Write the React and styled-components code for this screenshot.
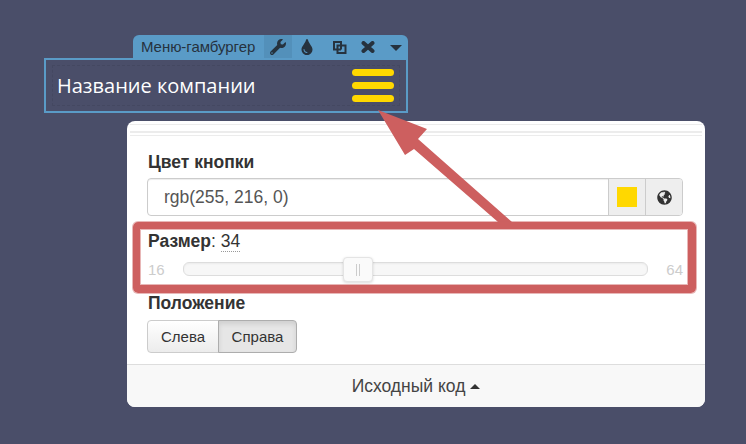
import React from "react";
import styled, { createGlobalStyle } from "styled-components";
import { FaWrench, FaTint, FaGlobeAmericas } from "react-icons/fa";

const GlobalStyle = createGlobalStyle`
  html, body {
    margin: 0;
    padding: 0;
    background: #4a4e69;
    font-family: "Liberation Sans", Arial, sans-serif;
  }
`;

const Stage = styled.div`
  position: relative;
  width: 746px;
  height: 444px;
  padding: 35px 0 0 44px;
  box-sizing: border-box;
  overflow: hidden;
`;

const Widget = styled.div`
  width: 364px;
  display: flex;
  flex-direction: column;
  align-items: flex-end;
`;

const Toolbar = styled.div`
  width: 275px;
  height: 23px;
  box-sizing: border-box;
  padding-left: 8px;
  display: flex;
  align-items: center;
  background: #5a9bc7;
  border-radius: 6px 6px 0 0;
  color: #26323e;
`;

const ToolbarTitle = styled.span`
  width: 123px;
  flex: none;
  font-size: 15px;
  letter-spacing: -0.05px;
`;

const ToolButton = styled.span`
  width: ${(p) => p.$w}px;
  flex: none;
  height: 23px;
  display: flex;
  align-items: center;
  justify-content: center;
  font-size: 16px;
  background: ${(p) => (p.$active ? "#5390ba" : "transparent")};
`;

const DownCaret = styled.span`
  width: 0;
  height: 0;
  margin: 3px 0 0 3px;
  border-left: 6.5px solid transparent;
  border-right: 6.5px solid transparent;
  border-top: 6px solid #26323e;
`;

const Block = styled.div`
  position: relative;
  width: 100%;
  height: 55px;
  box-sizing: border-box;
  border: 2px solid #5a9bc7;
  padding: 0 12px 0 11px;
  display: flex;
  align-items: center;
  justify-content: space-between;
  &::before {
    content: "";
    position: absolute;
    inset: 5px 6px;
    border: 1px dashed rgba(0, 0, 0, 0.07);
  }
`;

const CompanyName = styled.span`
  color: #fff;
  font-family: "Open Sans", "Noto Sans", sans-serif;
  font-size: 20px;
`;

const Burger = styled.div`
  width: 42px;
  display: flex;
  flex-direction: column;
  gap: 6px;
`;

const BurgerBar = styled.span`
  height: 7px;
  border-radius: 4px;
  background: #ffd800;
`;

const Panel = styled.div`
  width: 578px;
  height: 286px;
  margin: 8px 0 0 83px;
  background: #fff;
  border-radius: 8px;
  display: flex;
  flex-direction: column;
  overflow: hidden;
`;

const PanelStripes = styled.div`
  height: 10px;
  margin: 3px 3px 0;
  border-top: 1px solid #ececec;
  border-bottom: 1px solid #ececec;
  &::after {
    content: "";
    display: block;
    height: 2px;
    margin-top: 6px;
    background: #ececec;
  }
`;

const PanelBody = styled.div`
  flex: 1;
  padding: 16px 22px 0 20px;
  display: flex;
  flex-direction: column;
`;

const Label = styled.div`
  padding-left: 1px;
  font-size: 17.5px;
  font-weight: bold;
  line-height: 20px;
  color: #333;
`;

const InputGroup = styled.div`
  display: flex;
  height: 38px;
  margin-top: 6px;
  border: 1px solid #ccc;
  border-radius: 4px;
  box-sizing: border-box;
  overflow: hidden;
  box-shadow: inset 0 1px 1px rgba(0, 0, 0, 0.075);
`;

const InputText = styled.div`
  flex: 1;
  padding-left: 16px;
  font-size: 17.5px;
  line-height: 36px;
  color: #555;
`;

const Addon = styled.div`
  width: 37px;
  box-sizing: border-box;
  display: flex;
  align-items: center;
  justify-content: center;
  background: #eee;
  border-left: 1px solid #ccc;
  color: #333;
  font-size: 15px;
`;

const Swatch = styled.span`
  width: 20px;
  height: 20px;
  background: #ffd800;
`;

const SizeRow = styled.div`
  margin-top: 15px;
  padding-left: 1px;
  font-size: 17.5px;
  line-height: 20px;
  color: #333;
`;

const SizeName = styled.b`
  font-weight: bold;
`;

const SizeValue = styled.span`
  border-bottom: 1px dotted #999;
`;

const SliderRow = styled.div`
  display: flex;
  align-items: center;
  height: 26px;
  margin-top: 5px;
  font-size: 15px;
  color: #ccc;
`;

const SliderLimit = styled.span`
  width: ${(p) => p.$w}px;
  flex: none;
  text-align: ${(p) => p.$align};
  padding-left: ${(p) => p.$inset}px;
  box-sizing: border-box;
`;

const Track = styled.div`
  position: relative;
  width: 465px;
  height: 14px;
  box-sizing: border-box;
  background: #f7f7f7;
  border: 1px solid #ddd;
  border-radius: 6px;
  box-shadow: inset 0 1px 2px rgba(0, 0, 0, 0.05);
`;

const Handle = styled.div`
  position: absolute;
  top: -6px;
  left: 159px;
  width: 30px;
  height: 25px;
  box-sizing: border-box;
  background: #fafafa;
  border: 1px solid #e4e4e4;
  border-radius: 4px;
  box-shadow: 0 1px 3px rgba(0, 0, 0, 0.15);
  display: flex;
  align-items: center;
  justify-content: center;
  gap: 2px;
`;

const HandleLine = styled.span`
  width: 1px;
  height: 12px;
  background: #ccc;
`;

const PositionLabel = styled(Label)`
  margin-top: 11px;
`;

const ButtonGroup = styled.div`
  display: flex;
  margin-top: 7px;
`;

const SegButton = styled.div`
  width: ${(p) => p.$w}px;
  height: 33px;
  box-sizing: border-box;
  display: flex;
  align-items: center;
  justify-content: center;
  font-size: 15px;
  color: #333;
  border: 1px solid #ccc;
  background: ${(p) => (p.$active ? "#e6e6e6" : "linear-gradient(#fff, #ececec)")};
  border-color: ${(p) => (p.$active ? "#adadad" : "#ccc")};
  border-radius: ${(p) => (p.$active ? "0 4px 4px 0" : "4px 0 0 4px")};
  box-shadow: ${(p) => (p.$active ? "inset 0 3px 5px rgba(0,0,0,.1)" : "none")};
  margin-left: ${(p) => (p.$active ? "-1px" : "0")};
`;

const Footer = styled.div`
  height: 43px;
  box-sizing: border-box;
  border-top: 1px solid #ddd;
  background: #f8f8f8;
  display: flex;
  align-items: center;
  justify-content: center;
  gap: 5px;
  font-size: 17.5px;
  color: #444;
`;

const UpCaret = styled.span`
  width: 0;
  height: 0;
  margin-top: 1px;
  border-left: 5px solid transparent;
  border-right: 5px solid transparent;
  border-bottom: 5px solid #333;
`;

const Frame = styled.div`
  position: absolute;
  left: 133px;
  top: 222px;
  width: 563px;
  height: 71px;
  box-sizing: border-box;
  border-style: solid;
  border-color: #cd5f5f;
  border-width: 7px 8px 8px 7px;
  border-radius: 5px;
  box-shadow: 0 0 0 1px rgba(205, 95, 95, 0.45), inset 0 0 0 1px rgba(205, 95, 95, 0.45);
`;

const ArrowSvg = styled.svg`
  position: absolute;
  left: 0;
  top: 0;
`;

function CloneIcon() {
  return (
    <svg width="15" height="14" viewBox="0 0 15 14" fill="none" stroke="#26323e" strokeWidth="2">
      <path d="M9 9.5 H2 V2 H9 V9.5" />
      <rect x="5.5" y="5.5" width="8" height="7.5" />
    </svg>
  );
}

function CloseIcon() {
  return (
    <svg width="14" height="12" viewBox="0 0 14 12" stroke="#26323e" strokeWidth="4" strokeLinecap="round">
      <path d="M2.5 2 L11.5 10 M11.5 2 L2.5 10" />
    </svg>
  );
}

export default function App() {
  return (
    <>
      <GlobalStyle />
      <Stage>
        <Widget>
          <Toolbar>
            <ToolbarTitle>Меню-гамбургер</ToolbarTitle>
            <ToolButton $active $w={28}><FaWrench /></ToolButton>
            <ToolButton $w={30}><FaTint /></ToolButton>
            <ToolButton $w={34}><CloneIcon /></ToolButton>
            <ToolButton $w={24}><CloseIcon /></ToolButton>
            <ToolButton $w={28}><DownCaret /></ToolButton>
          </Toolbar>
          <Block>
            <CompanyName>Название компании</CompanyName>
            <Burger>
              <BurgerBar />
              <BurgerBar />
              <BurgerBar />
            </Burger>
          </Block>
        </Widget>
        <Panel>
          <PanelStripes />
          <PanelBody>
            <Label>Цвет кнопки</Label>
            <InputGroup>
              <InputText>rgb(255, 216, 0)</InputText>
              <Addon><Swatch /></Addon>
              <Addon><FaGlobeAmericas /></Addon>
            </InputGroup>
            <SizeRow>
              <SizeName>Размер</SizeName>: <SizeValue>34</SizeValue>
            </SizeRow>
            <SliderRow>
              <SliderLimit $w={36} $align="left" $inset={1}>16</SliderLimit>
              <Track>
                <Handle>
                  <HandleLine />
                  <HandleLine />
                </Handle>
              </Track>
              <SliderLimit $w={35} $align="right" $inset={0}>64</SliderLimit>
            </SliderRow>
            <PositionLabel>Положение</PositionLabel>
            <ButtonGroup>
              <SegButton $w={72}>Слева</SegButton>
              <SegButton $w={79} $active>Справа</SegButton>
            </ButtonGroup>
          </PanelBody>
          <Footer>
            Исходный код <UpCaret />
          </Footer>
        </Panel>
        <ArrowSvg width="746" height="444" viewBox="0 0 746 444">
          <polygon points="378,110 427,129 418,139 512,222 498,222 414,149 405,155" fill="#cd5f5f" />
        </ArrowSvg>
        <Frame />
      </Stage>
    </>
  );
}
